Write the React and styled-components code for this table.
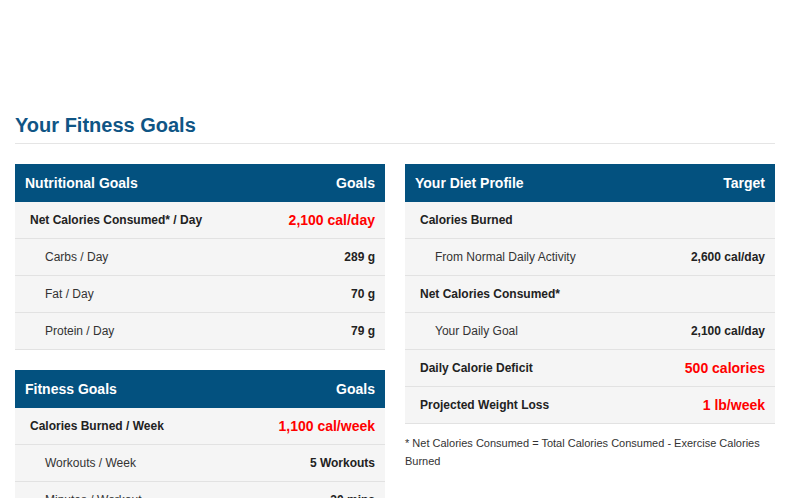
import React from "react";
import styled, { createGlobalStyle } from "styled-components";

const Global = createGlobalStyle`
  body {
    margin: 0;
    background: #fff;
    font-family: "Liberation Sans", Arial, sans-serif;
    color: #333;
  }
`;

const Page = styled.div`
  width: 760px;
  padding: 114px 0 0 15px;
`;

const Title = styled.h2`
  margin: 0 0 20px;
  padding-bottom: 6px;
  font-size: 20px;
  line-height: 23px;
  font-weight: bold;
  color: #0f5585;
  border-bottom: 1px solid #e5e5e5;
`;

const Columns = styled.div`
  display: grid;
  grid-template-columns: 370px 370px;
  column-gap: 20px;
  align-items: start;
`;

const Stack = styled.div`
  display: flex;
  flex-direction: column;
  gap: 20px;
`;

const Table = styled.div`
  display: flex;
  flex-direction: column;
`;

const Head = styled.div`
  display: flex;
  justify-content: space-between;
  align-items: center;
  height: 38px;
  padding: 0 10px;
  background: #03517f;
  color: #fff;
  font-size: 14px;
  font-weight: bold;
`;

const Row = styled.div`
  display: flex;
  justify-content: space-between;
  align-items: center;
  height: 36px;
  padding: 0 10px 0 ${(p) => (p.$sub ? 30 : 15)}px;
  background: #f5f5f5;
  border-bottom: 1px solid #e2e2e2;
  font-size: 12px;
`;

const Label = styled.span`
  color: ${(p) => (p.$sub ? "#333" : "#222")};
  font-weight: ${(p) => (p.$sub ? "normal" : "bold")};
`;

const Value = styled.span`
  font-weight: bold;
  color: ${(p) => (p.$hot ? "#f00" : "#222")};
  font-size: ${(p) => (p.$hot ? 14 : 12)}px;
`;

const Note = styled.p`
  margin: 10px 0 0;
  font-size: 11px;
  line-height: 18px;
  color: #333;
`;

function GoalTable({ title, col, rows }) {
  return (
    <Table>
      <Head>
        <span>{title}</span>
        <span>{col}</span>
      </Head>
      {rows.map((r) => (
        <Row key={r.label} $sub={r.sub}>
          <Label $sub={r.sub}>{r.label}</Label>
          {r.value && <Value $hot={r.hot}>{r.value}</Value>}
        </Row>
      ))}
    </Table>
  );
}

const nutrition = [
  { label: "Net Calories Consumed* / Day", value: "2,100 cal/day", hot: true },
  { label: "Carbs / Day", value: "289 g", sub: true },
  { label: "Fat / Day", value: "70 g", sub: true },
  { label: "Protein / Day", value: "79 g", sub: true },
];

const fitness = [
  { label: "Calories Burned / Week", value: "1,100 cal/week", hot: true },
  { label: "Workouts / Week", value: "5 Workouts", sub: true },
  { label: "Minutes / Workout", value: "30 mins", sub: true },
];

const diet = [
  { label: "Calories Burned" },
  { label: "From Normal Daily Activity", value: "2,600 cal/day", sub: true },
  { label: "Net Calories Consumed*" },
  { label: "Your Daily Goal", value: "2,100 cal/day", sub: true },
  { label: "Daily Calorie Deficit", value: "500 calories", hot: true },
  { label: "Projected Weight Loss", value: "1 lb/week", hot: true },
];

export default function App() {
  return (
    <>
      <Global />
      <Page>
        <Title>Your Fitness Goals</Title>
        <Columns>
          <Stack>
            <GoalTable title="Nutritional Goals" col="Goals" rows={nutrition} />
            <GoalTable title="Fitness Goals" col="Goals" rows={fitness} />
          </Stack>
          <div>
            <GoalTable title="Your Diet Profile" col="Target" rows={diet} />
            <Note>
              * Net Calories Consumed = Total Calories Consumed - Exercise Calories Burned
            </Note>
          </div>
        </Columns>
      </Page>
    </>
  );
}
